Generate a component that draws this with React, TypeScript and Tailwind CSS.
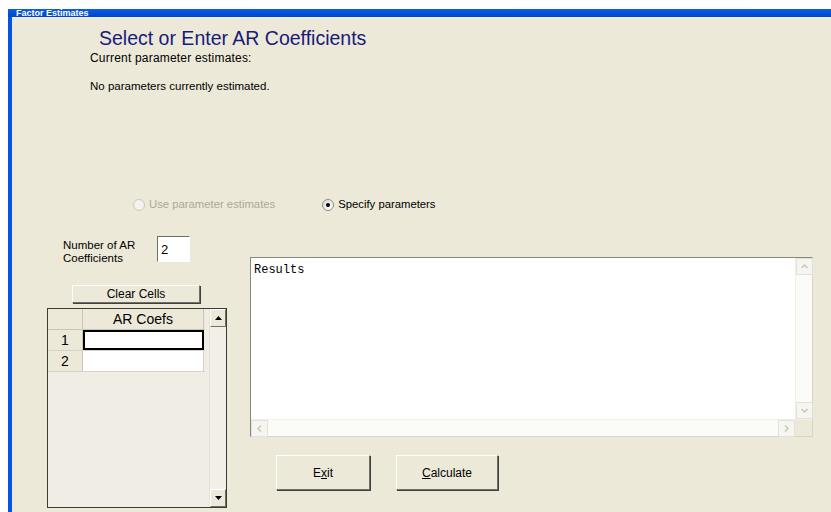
import type { ReactNode } from 'react';

const ui = "font-['Liberation_Sans',Arial,sans-serif]";

// classic raised 3D button edge
const raised =
  'border border-t-white border-l-white border-r-[#716f64] border-b-[#716f64] shadow-[1px_1px_0_#404040]';

function WinButton({ children, className = '' }: { children: ReactNode; className?: string }) {
  return (
    <div className={`bg-[#ece9d8] ${raised} flex items-center justify-center text-[12px] text-black ${className}`}>
      {children}
    </div>
  );
}

function Radio({ checked, disabled, label }: { checked?: boolean; disabled?: boolean; label: string }) {
  return (
    <div className="flex items-center gap-[4px]">
      <span
        className={`w-[12px] h-[12px] rounded-full border flex items-center justify-center ${
          disabled ? 'border-[#cac8bb] bg-[#f4f3ee]' : 'border-[#8d8b80] bg-gradient-to-br from-[#dcdcd7] to-white'
        }`}
      >
        {checked && <span className="w-[4px] h-[4px] rounded-full bg-black" />}
      </span>
      <span className={`text-[11.3px] ${disabled ? 'text-[#aca899]' : 'text-black'}`}>{label}</span>
    </div>
  );
}

function ClassicArrow({ dir }: { dir: 'up' | 'down' }) {
  return (
    <div className={`h-[18px] bg-[#ece9d8] ${raised} shadow-none flex items-center justify-center`}>
      <svg width="7" height="4" viewBox="0 0 7 4">
        {dir === 'up' ? <path d="M3.5 0 L7 4 L0 4 Z" fill="#000" /> : <path d="M0 0 L7 0 L3.5 4 Z" fill="#000" />}
      </svg>
    </div>
  );
}

function XpArrow({ d, className = '' }: { d: string; className?: string }) {
  return (
    <div className={`w-[17px] h-[17px] border border-[#e4e2d8] bg-[#f6f5f0] flex items-center justify-center ${className}`}>
      <svg width="9" height="9" viewBox="0 0 9 9">
        <path d={d} fill="none" stroke="#c9c7ba" strokeWidth="1.5" />
      </svg>
    </div>
  );
}

function CoefGrid() {
  const rows = [1, 2];
  return (
    <div className="w-[180px] h-[200px] border border-[#3b3a35] bg-[#f0eee4] flex">
      <div className="flex-1 flex flex-col">
        <div className="flex h-[21px] bg-[#ece9d8] border-b border-[#c9c6b8]">
          <div className="w-[35px] border-r border-[#c9c6b8]" />
          <div className="w-[121px] border-r border-[#c9c6b8] flex items-center justify-center text-[14px]">AR Coefs</div>
        </div>
        {rows.map(r => (
          <div key={r} className="flex h-[21px] border-b border-[#d6d3c6]">
            <div className="w-[35px] bg-[#ece9d8] border-r border-[#c9c6b8] flex items-center justify-center text-[14px]">{r}</div>
            <div className={`w-[121px] bg-white ${r === 1 ? 'border-2 border-black' : 'border-r border-[#d6d3c6]'}`} />
          </div>
        ))}
      </div>
      <div className="w-[17px] ml-[4px] bg-[#f1efe6] border-l border-[#e4e2d8] flex flex-col justify-between">
        <ClassicArrow dir="up" />
        <ClassicArrow dir="down" />
      </div>
    </div>
  );
}

function ResultsBox() {
  return (
    <div className="w-[563px] h-[180px] border border-t-[#8a887c] border-l-[#8a887c] border-r-[#d6d4c6] border-b-[#d6d4c6] bg-white flex flex-col">
      <div className="flex-1 flex min-h-0">
        <div className="flex-1 pl-[3px] pt-[5px] font-['Liberation_Mono','Courier_New',monospace] text-[12px] leading-[14px] text-black">
          Results
        </div>
        <div className="w-[17px] bg-[#fbfbf8] border-l border-[#f0efe8] flex flex-col justify-between">
          <XpArrow d="M1.5 6 L4.5 3 L7.5 6" />
          <XpArrow d="M1.5 3 L4.5 6 L7.5 3" />
        </div>
      </div>
      <div className="h-[17px] flex bg-[#fbfbf8] border-t border-[#f0efe8]">
        <div className="flex-1 flex justify-between">
          <XpArrow d="M6 1.5 L3 4.5 L6 7.5" />
          <XpArrow d="M3 1.5 L6 4.5 L3 7.5" />
        </div>
        <div className="w-[17px] bg-[#ece9d8]" />
      </div>
    </div>
  );
}

export default function App() {
  return (
    <div className={`w-[831px] h-[512px] bg-white pl-[8px] pt-[9px] flex flex-col overflow-hidden ${ui}`}>
      {/* window frame: caption strip on top, blue border on the left */}
      <div className="h-[8px] overflow-hidden bg-gradient-to-b from-[#0a5fe8] to-[#0046c8] pl-[8px]">
        <div className="text-[9px] font-bold text-white leading-[8px]">Factor Estimates</div>
      </div>
      <div className="flex-1 flex min-h-0">
        <div className="w-[4px] bg-[#0055e5]" />
        <div className="flex-1 bg-[#ece9d8] border-t border-[#f4f2e8] flex flex-col">
          <div className="ml-[87px] mt-[9px] text-[19.5px] leading-[22px] text-[#1a1a7a]">Select or Enter AR Coefficients</div>
          <div className="ml-[78px] mt-[0px] text-[12px] tracking-[0.2px] text-black">Current parameter estimates:</div>
          <div className="ml-[78px] mt-[11px] text-[11.5px] text-black">No parameters currently estimated.</div>

          <div className="flex items-center gap-[47px] ml-[121px] mt-[101px]">
            <Radio disabled label="Use parameter estimates" />
            <Radio checked label="Specify parameters" />
          </div>

          <div className="flex mt-[22px]">
            <div className="ml-[35px] w-[180px] flex flex-col">
              <div className="flex items-start">
                <div className="ml-[16px] w-[94px] text-[11.5px] leading-[13px] pt-[4px]">
                  Number of AR
                  <br />
                  Coefficients
                </div>
                <div className="w-[33px] h-[26px] mt-[1px] bg-white border border-t-[#716f64] border-l-[#716f64] border-r-white border-b-white text-[13px] pl-[3px] pt-[3px]">
                  2
                </div>
              </div>
              <WinButton className="ml-[25px] w-[128px] h-[18px] mt-[20px]">Clear Cells</WinButton>
              <div className="mt-[5px]">
                <CoefGrid />
              </div>
            </div>
            <div className="ml-[23px] mt-[22px] flex flex-col">
              <ResultsBox />
              <div className="flex gap-[26px] ml-[26px] mt-[18px]">
                <WinButton className="w-[94px] h-[35px]">
                  E<span className="underline">x</span>it
                </WinButton>
                <WinButton className="w-[102px] h-[35px]">
                  <span className="underline">C</span>alculate
                </WinButton>
              </div>
            </div>
          </div>
        </div>
      </div>
    </div>
  );
}
